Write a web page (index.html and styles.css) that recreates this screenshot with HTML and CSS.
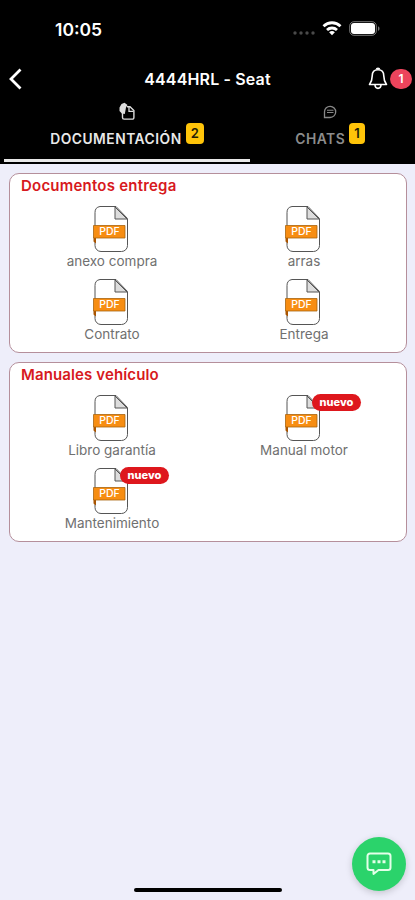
FILE: index.html
```html
<!DOCTYPE html>
<html lang="es">
<head>
<meta charset="UTF-8" />
<meta name="viewport" content="width=device-width, initial-scale=1" />
<title>4444HRL - Seat</title>
<link rel="stylesheet" href="styles.css">
</head>
<body>

<!-- Icono PDF compartido -->
<svg class="sprite" width="0" height="0">
  <symbol id="pdf" viewBox="0 0 38 48">
    <path d="M8 1.500h16L35.500 13.500V40.500a6 6 0 0 1-6 6H9a6 6 0 0 1-6-6V7.500a6 6 0 0 1 5-6z" fill="#fff" stroke="#555" stroke-width="1" />
    <path d="M23 2v12h12z" fill="#ddd" stroke="#555" stroke-width="1" />
    <path d="M1.500 32.500v4l2.500 2v-6z" fill="#a95400" />
    <path d="M1.500 20.500h31.500v12.500h-31.500z" fill="#f78d12" stroke="#a8640f" stroke-width=".8" />
  </symbol>
</svg>

<header>
  <!-- Barra de estado -->
  <div class="status-bar">
    <span class="time">10:05</span>
    <div class="status-icons">
      <svg class="signal" width="22" height="4" viewBox="0 0 22 4" fill="#4a4a4a">
        <circle cx="2" cy="2" r="1.700" /><circle cx="8" cy="2" r="1.700" />
        <circle cx="14" cy="2" r="1.700" /><circle cx="20" cy="2" r="1.700" />
      </svg>
      <svg class="wifi" width="20" height="15" viewBox="0 0 20 15" fill="none" stroke="#fff" stroke-width="2.800">
        <path d="M1.500 5.200a12.200 12.200 0 0 1 17 0" />
        <path d="M5 9a7.200 7.200 0 0 1 10 0" />
        <path d="M10 14.200l-2.900-2.900a4.200 4.200 0 0 1 5.800 0z" fill="#fff" stroke="none" />
      </svg>
      <svg width="32" height="15" viewBox="0 0 32 15">
        <rect x=".7" y=".7" width="26.600" height="13.600" rx="4.200" fill="none" stroke="#777" />
        <rect x="2" y="2" width="24" height="11" rx="3" fill="#fff" />
        <path d="M29 5.200c2 .8 2 3.800 0 4.600z" fill="#777" />
      </svg>
    </div>
  </div>

  <!-- Navegación -->
  <div class="nav">
    <svg class="back" width="14" height="22" viewBox="0 0 14 22" fill="none" stroke="#fff" stroke-width="2.800">
      <path d="M12.500 1.500L3 11l9.500 9.500" />
    </svg>
    <h1>4444HRL - Seat</h1>
    <div class="alerts">
      <svg width="20" height="24" viewBox="0 0 20 24" fill="none" stroke="#fff" stroke-width="1.600" stroke-linejoin="round">
        <path d="M10 2.800c-4 0-5.800 2.700-5.800 6.200 0 5-1 6.300-2.700 8.500h17c-1.700-2.200-2.700-3.500-2.700-8.500 0-3.500-1.800-6.200-5.800-6.200z" />
        <path d="M8.500 2.500a1.500 1.300 0 0 1 3 0M7 18c.3 4.500 5.700 4.500 6 0" />
      </svg>
      <span class="alert-count">1</span>
    </div>
  </div>

  <!-- Pestañas -->
  <div class="tabs">
    <div class="tab active">
      <svg width="18" height="19" viewBox="0 0 18 19">
        <path d="M4.500 7v8.500a1.600 1.600 0 0 0 1.600 1.600h8.200a1.600 1.600 0 0 0 1.600-1.600V8.500L12 4.800H9" fill="none" stroke="#ddd" stroke-width="1.400" />
        <path d="M1.500 5.500L3.500 2l3-1.200 3 2.200L8 5.500 6.800 12l-3-.5L1.500 9z" fill="#ddd" />
        <path d="M11 5v4.300h4.500" fill="none" stroke="#ddd" stroke-width="1.300" />
      </svg>
      <p>DOCUMENTACIÓN<span class="badge">2</span></p>
    </div>
    <div class="tab">
      <svg width="18" height="19" viewBox="0 0 18 19" fill="none" stroke="#888" stroke-width="1.300">
        <path d="M3.500 15.500V9.700a5.600 5.600 0 1 1 5.600 5.800z" />
        <path d="M6 8.300h6.500M6 10.500h6.500" stroke-width="1.100" />
      </svg>
      <p>CHATS<span class="badge">1</span></p>
    </div>
  </div>
</header>

<main>
  <section class="card">
    <h2>Documentos entrega</h2>
    <div class="docs">
      <div class="doc"><svg class="pdf"><use href="#pdf" /></svg><span class="pdf-text">PDF</span><p>anexo compra</p></div>
      <div class="doc"><svg class="pdf"><use href="#pdf" /></svg><span class="pdf-text">PDF</span><p>arras</p></div>
      <div class="doc"><svg class="pdf"><use href="#pdf" /></svg><span class="pdf-text">PDF</span><p>Contrato</p></div>
      <div class="doc"><svg class="pdf"><use href="#pdf" /></svg><span class="pdf-text">PDF</span><p>Entrega</p></div>
    </div>
  </section>

  <section class="card manuals">
    <h2>Manuales vehículo</h2>
    <div class="docs">
      <div class="doc"><svg class="pdf"><use href="#pdf" /></svg><span class="pdf-text">PDF</span><p>Libro garantía</p></div>
      <div class="doc"><svg class="pdf"><use href="#pdf" /></svg><span class="pdf-text">PDF</span><span class="new">nuevo</span><p>Manual motor</p></div>
      <div class="doc"><svg class="pdf"><use href="#pdf" /></svg><span class="pdf-text">PDF</span><span class="new">nuevo</span><p>Mantenimiento</p></div>
    </div>
  </section>
</main>

<!-- Botón flotante chat -->
<div class="chat-float">
  <svg width="26" height="24" viewBox="0 0 26 24" fill="none" stroke="#e4ffe9" stroke-width="2" stroke-linejoin="round">
    <path d="M4 1.500h18a2.500 2.500 0 0 1 2.500 2.500v11.500A2.500 2.500 0 0 1 22 18H12.500L7.500 22v-4H4a2.500 2.500 0 0 1-2.500-2.500V4A2.500 2.500 0 0 1 4 1.500z" />
    <path d="M6.500 9.800h3M11.500 9.800h3M16.500 9.800h3" stroke-width="3" />
  </svg>
</div>
<div class="home-bar"></div>

</body>
</html>
```
FILE: styles.css
```css
* {
  margin: 0; padding: 0; box-sizing: border-box;
}
body {
  height: 900px;
  overflow: hidden;
  font-family: Inter, "Liberation Sans", sans-serif;
  background: #eeeefa;
}
svg {
  display: block;
}
.sprite {
  position: absolute;
}

/* Cabecera */
header {
  height: 164px;
  background: #000;
  color: #fff;
}
.status-bar {
  display: flex;
  justify-content: space-between;
  align-items: center;
  height: 58px;
  padding: 0 34px 0 55px;
}
.time {
  font-size: 17.5px;
  font-weight: 600;
}
.status-icons {
  display: flex;
  align-items: center;
  gap: 7px;
  margin-top: -1px;
}
.signal {
  margin-top: 9px;
}

/* Navegación */
.nav {
  display: grid;
  grid-template-columns: 60px 1fr 60px;
  align-items: center;
  height: 42px;
  padding: 0 3px 0 8px;
}
.back {
  margin-top: -1px;
}
.nav h1 {
  margin-left: -5px;
  font-size: 16px;
  font-weight: 600;
  letter-spacing: .15px;
  text-align: center;
}
.alerts {
  display: flex;
  align-items: center;
  justify-content: flex-end;
  gap: 2px;
}
.alert-count {
  width: 22px;
  height: 20px;
  border-radius: 10px;
  background: #ec445c;
  font-size: 12px;
  font-weight: 600;
  line-height: 20px;
  text-align: center;
}

/* Pestañas */
.tabs {
  display: flex;
  height: 62px;
  padding: 0 5px 0 4px;
}
.tab {
  width: 160px;
  display: flex;
  flex-direction: column;
  align-items: center;
  padding-top: 2px;
  color: #8c8c8c;
  border-bottom: 3px solid transparent;
}
.tab.active {
  width: 246px;
  color: #e8e8e8;
  border-color: #e8e8e8;
}
.tab p {
  display: flex;
  font-size: 13.8px;
  font-weight: 600;
  letter-spacing: .5px;
  line-height: 36px;
}
.badge {
  height: 21px;
  margin: 2px 0 0 4px;
  padding: 0 5px;
  border-radius: 4px;
  background: #ffc409;
  color: #221c05;
  font-size: 13px;
  letter-spacing: 0;
  line-height: 20px;
}

/* Tarjetas */
main {
  display: flex;
  flex-direction: column;
  gap: 9px;
  padding: 9px 8px 0 9px;
}
.card {
  height: 180px;
  padding: 2px 6px 0;
  border: 1px solid #b58f9b;
  border-radius: 10px;
  background: #fff;
}
.card h2 {
  padding-left: 5px;
  color: #d71920;
  font-size: 15px;
  font-weight: 600;
  letter-spacing: .22px;
  line-height: 19px;
}
.manuals h2 {
  letter-spacing: .12px;
}
.docs {
  display: grid;
  grid-template-columns: 1fr 1fr;
  grid-auto-rows: 73px;
  padding-top: 10px;
}
.doc {
  position: relative;
  display: flex;
  flex-direction: column;
  align-items: center;
}
.pdf {
  width: 38px;
  height: 48px;
  margin-right: 2px;
}
.pdf-text {
  position: absolute;
  top: 20px;
  left: 0;
  width: 100%;
  padding-right: 5px;
  color: #fff;
  font-size: 10.5px;
  font-weight: 500;
  line-height: 13px;
  text-align: center;
}
.doc p {
  color: #707070;
  font-size: 13.5px;
  line-height: 16px;
}
.new {
  position: absolute;
  top: 0;
  left: 104px;
  width: 49px;
  height: 17px;
  border-radius: 9px;
  background: #de171d;
  color: #fff;
  font-size: 11px;
  font-weight: 800;
  line-height: 17px;
  text-align: center;
}

/* Botón flotante */
.chat-float {
  position: fixed;
  right: 9px;
  bottom: 9px;
  width: 54px;
  height: 54px;
  display: flex;
  align-items: center;
  justify-content: center;
  border-radius: 50%;
  background: #2bd36b;
  box-shadow: 0 2px 7px rgba(0,0,0,0.18);
}
.home-bar {
  position: fixed;
  left: 134px;
  bottom: 8px;
  width: 148px;
  height: 4px;
  border-radius: 2px;
  background: #000;
}
```
